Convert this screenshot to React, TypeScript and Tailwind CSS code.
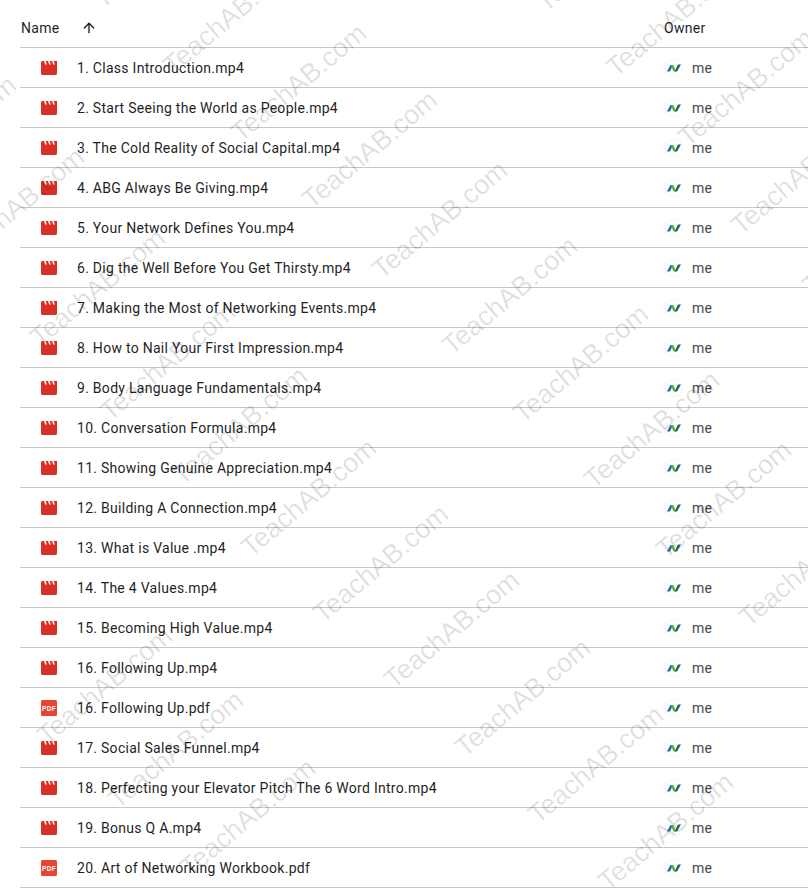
import React from 'react';
import { ArrowUp } from 'lucide-react';

interface FileRow {
  name: string;
  type: 'video' | 'pdf';
}

const files: FileRow[] = [
  { name: '1. Class Introduction.mp4', type: 'video' },
  { name: '2. Start Seeing the World as People.mp4', type: 'video' },
  { name: '3. The Cold Reality of Social Capital.mp4', type: 'video' },
  { name: '4. ABG Always Be Giving.mp4', type: 'video' },
  { name: '5. Your Network Defines You.mp4', type: 'video' },
  { name: '6. Dig the Well Before You Get Thirsty.mp4', type: 'video' },
  { name: '7. Making the Most of Networking Events.mp4', type: 'video' },
  { name: '8. How to Nail Your First Impression.mp4', type: 'video' },
  { name: '9. Body Language Fundamentals.mp4', type: 'video' },
  { name: '10. Conversation Formula.mp4', type: 'video' },
  { name: '11. Showing Genuine Appreciation.mp4', type: 'video' },
  { name: '12. Building A Connection.mp4', type: 'video' },
  { name: '13. What is Value .mp4', type: 'video' },
  { name: '14. The 4 Values.mp4', type: 'video' },
  { name: '15. Becoming High Value.mp4', type: 'video' },
  { name: '16. Following Up.mp4', type: 'video' },
  { name: '16. Following Up.pdf', type: 'pdf' },
  { name: '17. Social Sales Funnel.mp4', type: 'video' },
  { name: '18. Perfecting your Elevator Pitch The 6 Word Intro.mp4', type: 'video' },
  { name: '19. Bonus Q A.mp4', type: 'video' },
  { name: '20. Art of Networking Workbook.pdf', type: 'pdf' },
];

// centres of the repeated watermark
const watermarks: [number, number][] = [
  [161, -50], [231, 16], [299, 83], [370, 150], [440, 220], [510, 296], [581, 364], [652, 430], [724, 500], [807, 568],
  [-51, 135], [17, 207], [98, 288], [168, 362], [240, 426], [309, 498], [381, 564], [452, 630], [523, 698], [596, 765], [666, 832],
  [105, 686], [176, 750], [248, 818],
  [604, -47], [674, 18], [746, 88], [799, 176], [870, 236],
];

const VideoIcon = () => (
  <svg width="16" height="14" viewBox="0 0 16 14" className="block">
    <path d="M0 1.5C0 .7.7 0 1.5 0H16v12.5c0 .8-.7 1.5-1.5 1.5h-13C.7 14 0 13.3 0 12.5z" fill="#d93025" />
    <path d="M3 0h1.6l1.2 3.4H4.2zM7 0h1.6l1.2 3.4H8.2zM11 0h1.6l1.2 3.4h-1.6z" fill="#ffffff" />
  </svg>
);

const PdfIcon = () => (
  <svg width="16" height="16" viewBox="0 0 16 16" className="block">
    <rect width="16" height="16" rx="1.5" fill="#ea4335" />
    <text x="8" y="10.6" textAnchor="middle" fontSize="6.5" fontWeight="700" fontFamily="'Liberation Sans', sans-serif" fill="#ffffff">
      PDF
    </text>
  </svg>
);

const OwnerLogo = () => (
  <div className="flex h-[18px] w-[18px] items-center justify-center rounded-full border border-[#f3f3f3] bg-white">
    <svg width="14" height="8" viewBox="0 0 14 8" className="block">
      <polygon points="0,7.5 3,7.5 6,1 3.4,1" fill="#1a6fa8" />
      <polygon points="3.4,1 6.4,1 9,7.5 6.6,7.5" fill="#6aa83a" />
      <polygon points="7.6,7.5 10,7.5 14,.5 11,.5" fill="#146c6c" />
    </svg>
  </div>
);

export default function App() {
  return (
    <div className="relative h-[888px] w-[808px] overflow-hidden bg-white font-['Roboto',sans-serif] text-sm tracking-[0.28px] text-[#1f1f1f]">
      <div className="ml-5">
        {/* En-tête */}
        <div className="flex h-[48px] items-center border-b border-[#c7c7c7] pt-[9px]">
          <div className="flex w-[644px] items-center pl-[1px]">
            <span className="w-[56px]">Name</span>
            <ArrowUp size={16} strokeWidth={2} className="ml-[4px] text-[#1f1f1f]" />
          </div>
          <span>Owner</span>
        </div>

        {/* Lignes */}
        {files.map(file => (
          <div key={file.name} className="flex h-10 items-center border-b border-[#c7c7c7]">
            <div className="flex w-[644px] items-center pl-[21px]">
              <div className="flex w-4 justify-center">
                {file.type === 'video' ? <VideoIcon /> : <PdfIcon />}
              </div>
              <span className="ml-5 whitespace-nowrap">{file.name}</span>
            </div>
            <div className="flex items-center pl-[1px]">
              <OwnerLogo />
              <span className="ml-[9px] text-[#444746]">me</span>
            </div>
          </div>
        ))}
      </div>

      {/* Filigrane */}
      {watermarks.map(([x, y]) => (
        <span
          key={`${x}-${y}`}
          className="pointer-events-none absolute -translate-x-1/2 -translate-y-1/2 -rotate-[40deg] whitespace-nowrap font-['Liberation_Sans',sans-serif] text-[27px] leading-none tracking-normal text-black/[0.13]"
          style={{ left: x, top: y }}
        >
          TeachAB.com
        </span>
      ))}
    </div>
  );
}
